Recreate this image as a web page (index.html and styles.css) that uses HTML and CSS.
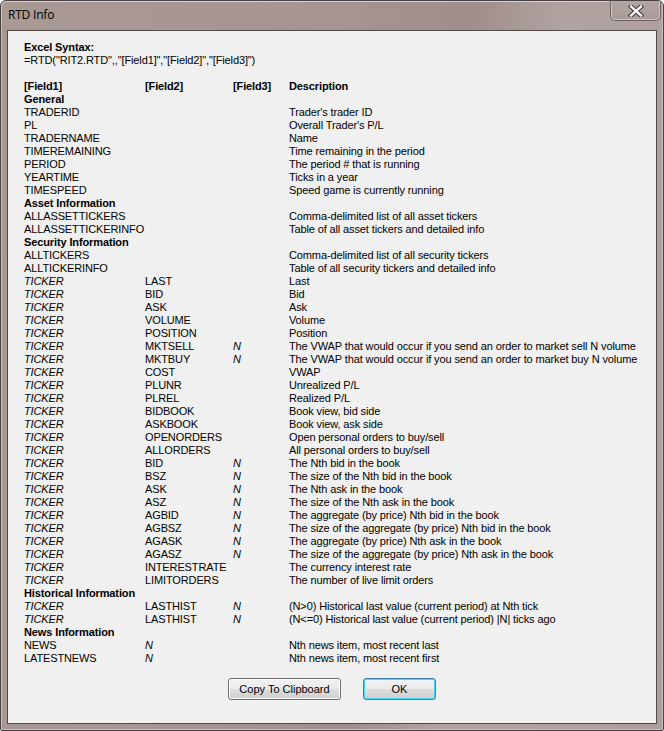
FILE: index.html
```html
<!DOCTYPE html>
<html>
<head>
<meta charset="utf-8">
<title>RTD Info</title>
<link rel="stylesheet" href="styles.css">
</head>
<body>
<div class="window">
  <div class="titlebar">
    <span class="title">RTD Info</span>
    <button class="close" aria-label="Close">
      <svg width="16" height="12" viewBox="0 0 16 12">
        <path d="M3 1.5 L13 10.5 M13 1.5 L3 10.5" stroke="#3e3a3a" stroke-width="4.5" stroke-linecap="square"/>
        <path d="M3 1.5 L13 10.5 M13 1.5 L3 10.5" stroke="#f4f2f2" stroke-width="2.4" stroke-linecap="square"/>
      </svg>
    </button>
  </div>
  <div class="client">
    <div class="syntax">
      <div class="b">Excel Syntax:</div>
      <div>=RTD("RIT2.RTD",,"[Field1]","[Field2]","[Field3]")</div>
    </div>
    <div class="grid">
      <div class="b">[Field1]</div><div class="b">[Field2]</div><div class="b">[Field3]</div><div class="b">Description</div>
      <div class="b sec">General</div>
      <div>TRADERID</div><div></div><div></div><div>Trader's trader ID</div>
      <div>PL</div><div></div><div></div><div>Overall Trader's P/L</div>
      <div>TRADERNAME</div><div></div><div></div><div>Name</div>
      <div>TIMEREMAINING</div><div></div><div></div><div>Time remaining in the period</div>
      <div>PERIOD</div><div></div><div></div><div>The period # that is running</div>
      <div>YEARTIME</div><div></div><div></div><div>Ticks in a year</div>
      <div>TIMESPEED</div><div></div><div></div><div>Speed game is currently running</div>
      <div class="b sec">Asset Information</div>
      <div>ALLASSETTICKERS</div><div></div><div></div><div>Comma-delimited list of all asset tickers</div>
      <div>ALLASSETTICKERINFO</div><div></div><div></div><div>Table of all asset tickers and detailed info</div>
      <div class="b sec">Security Information</div>
      <div>ALLTICKERS</div><div></div><div></div><div>Comma-delimited list of all security tickers</div>
      <div>ALLTICKERINFO</div><div></div><div></div><div>Table of all security tickers and detailed info</div>
      <div class="i">TICKER</div><div>LAST</div><div></div><div>Last</div>
      <div class="i">TICKER</div><div>BID</div><div></div><div>Bid</div>
      <div class="i">TICKER</div><div>ASK</div><div></div><div>Ask</div>
      <div class="i">TICKER</div><div>VOLUME</div><div></div><div>Volume</div>
      <div class="i">TICKER</div><div>POSITION</div><div></div><div>Position</div>
      <div class="i">TICKER</div><div>MKTSELL</div><div class="i">N</div><div>The VWAP that would occur if you send an order to market sell N volume</div>
      <div class="i">TICKER</div><div>MKTBUY</div><div class="i">N</div><div>The VWAP that would occur if you send an order to market buy N volume</div>
      <div class="i">TICKER</div><div>COST</div><div></div><div>VWAP</div>
      <div class="i">TICKER</div><div>PLUNR</div><div></div><div>Unrealized P/L</div>
      <div class="i">TICKER</div><div>PLREL</div><div></div><div>Realized P/L</div>
      <div class="i">TICKER</div><div>BIDBOOK</div><div></div><div>Book view, bid side</div>
      <div class="i">TICKER</div><div>ASKBOOK</div><div></div><div>Book view, ask side</div>
      <div class="i">TICKER</div><div>OPENORDERS</div><div></div><div>Open personal orders to buy/sell</div>
      <div class="i">TICKER</div><div>ALLORDERS</div><div></div><div>All personal orders to buy/sell</div>
      <div class="i">TICKER</div><div>BID</div><div class="i">N</div><div>The Nth bid in the book</div>
      <div class="i">TICKER</div><div>BSZ</div><div class="i">N</div><div>The size of the Nth bid in the book</div>
      <div class="i">TICKER</div><div>ASK</div><div class="i">N</div><div>The Nth ask in the book</div>
      <div class="i">TICKER</div><div>ASZ</div><div class="i">N</div><div>The size of the Nth ask in the book</div>
      <div class="i">TICKER</div><div>AGBID</div><div class="i">N</div><div>The aggregate (by price) Nth bid in the book</div>
      <div class="i">TICKER</div><div>AGBSZ</div><div class="i">N</div><div>The size of the aggregate (by price) Nth bid in the book</div>
      <div class="i">TICKER</div><div>AGASK</div><div class="i">N</div><div>The aggregate (by price) Nth ask in the book</div>
      <div class="i">TICKER</div><div>AGASZ</div><div class="i">N</div><div>The size of the aggregate (by price) Nth ask in the book</div>
      <div class="i">TICKER</div><div>INTERESTRATE</div><div></div><div>The currency interest rate</div>
      <div class="i">TICKER</div><div>LIMITORDERS</div><div></div><div>The number of live limit orders</div>
      <div class="b sec">Historical Information</div>
      <div class="i">TICKER</div><div>LASTHIST</div><div class="i">N</div><div>(N&gt;0) Historical last value (current period) at Nth tick</div>
      <div class="i">TICKER</div><div>LASTHIST</div><div class="i">N</div><div>(N&lt;=0) Historical last value (current period) |N| ticks ago</div>
      <div class="b sec">News Information</div>
      <div>NEWS</div><div class="i">N</div><div></div><div>Nth news item, most recent last</div>
      <div>LATESTNEWS</div><div class="i">N</div><div></div><div>Nth news item, most recent first</div>
    </div>
    <div class="buttons">
      <button class="btn copy">Copy To Clipboard</button>
      <button class="btn ok">OK</button>
    </div>
  </div>
</div>
</body>
</html>
```
FILE: styles.css
```css
html, body {
  margin: 0;
  padding: 0;
  background: #ffffff;
}
.window {
  width: 664px;
  height: 731px;
  box-sizing: border-box;
  border: 1px solid #4a4242;
  border-radius: 6px 6px 2px 2px;
  background: linear-gradient(100deg, #a99994 0%, #a59692 40%, #9f8f8b 60%, #b1a4a0 72%, #ac9e9a 100%);
  box-shadow: inset 0 1px 0 #d9cfcc, inset 1px 0 0 #cbbfbc, inset -1px 0 0 #cbbfbc, inset 0 -1px 0 #cbbfbc;
  display: flex;
  flex-direction: column;
  font-family: "Liberation Sans", Arial, sans-serif;
}
.titlebar {
  height: 28px;
  flex: none;
  display: flex;
  align-items: flex-start;
  justify-content: space-between;
}
.title {
  font-family: "Open Sans", "Liberation Sans", sans-serif;
  font-size: 12px;
  line-height: 28px;
  padding-left: 7px;
  color: #000;
  letter-spacing: -0.2px;
}
.close {
  width: 51px;
  height: 20px;
  margin: 0 2px 0 0;
  padding: 0;
  border: 1px solid #6f6360;
  border-top: none;
  border-radius: 0 0 5px 5px;
  background: linear-gradient(#b4a7a3, #a89a96);
  box-shadow: inset 1px 0 0 #cfc4c1, inset -1px 0 0 #cfc4c1, inset 0 -1px 0 #cfc4c1;
  display: flex;
  align-items: center;
  justify-content: center;
}
.client {
  flex: 1;
  margin: 1px 6px 6px 6px;
  border: 1px solid #514848;
  background: #f0f0f0;
  padding: 10px 0 0 16px;
  font-size: 11px;
  line-height: 13px;
  letter-spacing: -0.12px;
  color: #000;
  display: flex;
  flex-direction: column;
}
.syntax {
  margin-bottom: 13px;
}
.b { font-weight: bold; }
.i { font-style: italic; }
.grid {
  display: grid;
  grid-template-columns: 121px 88px 56px 1fr;
  grid-auto-rows: 13px;
  white-space: nowrap;
}
.sec {
  grid-column: 1 / -1;
}
.buttons {
  display: flex;
  gap: 22px;
  margin-top: 13px;
  padding-left: 204px;
}
.btn {
  font-family: "Liberation Sans", Arial, sans-serif;
  font-size: 11px;
  height: 22px;
  padding: 0;
  border: 1px solid #707070;
  border-radius: 3px;
  background: linear-gradient(#f2f2f2 0%, #ebebeb 48%, #dddddd 52%, #cfcfcf 100%);
  box-shadow: inset 0 0 0 1px #fcfcfc;
  color: #000;
}
.copy { width: 113px; }
.ok {
  width: 73px;
  border-color: #3c7fb1;
  box-shadow: inset 0 0 0 1px #48d8fb;
}
```
